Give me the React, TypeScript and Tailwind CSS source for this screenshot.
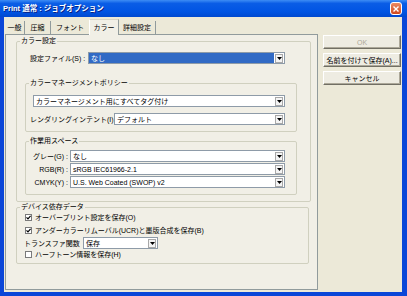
import React from "react"

type ComboProps = {
  text: string
  width: string
  active?: boolean
}

function Combo({ text, width, active }: ComboProps) {
  return (
    <div className={`flex h-[12px] shrink-0 items-center border border-[#8E9BA8] bg-white ${width}`}>
      <div
        className={`flex h-full flex-1 items-center overflow-hidden whitespace-nowrap pl-[2px] ${
          active ? "bg-[#316AC5] text-white" : "text-black"
        }`}
      >
        {text}
      </div>
      <div className="ml-[1px] mr-[1px] flex h-[9px] w-[8px] items-center justify-center border border-[#A8A8A8] bg-[#F4F4F4]">
        <svg width="5" height="3" viewBox="0 0 5 3">
          <path d="M0 0h5L2.5 3z" fill="#000" />
        </svg>
      </div>
    </div>
  )
}

function Check({ checked, label }: { checked?: boolean; label: string }) {
  return (
    <div className="flex h-[10px] items-center gap-[3px]">
      <div className="flex h-[7px] w-[7px] items-center justify-center border border-[#7A7A7A] bg-white">
        {checked && (
          <svg width="5" height="5" viewBox="0 0 5 5">
            <path d="M0.5 2.3l1.5 1.6L4.6 0.8" stroke="#000" strokeWidth="1.2" fill="none" />
          </svg>
        )}
      </div>
      <span className="whitespace-nowrap">{label}</span>
    </div>
  )
}

function Button({ label, disabled }: { label: string; disabled?: boolean }) {
  return (
    <div
      className={`flex h-[14px] w-[78px] items-center justify-center whitespace-nowrap border border-b-[#716F64] border-l-white border-r-[#716F64] border-t-white bg-[#EEECE2] shadow-[inset_-1px_-1px_#ACA899] ${
        disabled ? "text-[#ACA899]" : "text-black"
      }`}
    >
      {label}
    </div>
  )
}

export default function App() {
  return (
    <div className="flex h-[296px] w-[407px] flex-col bg-[#0A46D8] font-['Liberation_Sans','Noto_Sans_CJK_JP',sans-serif] text-[7px] leading-none text-black">
      {/* title bar */}
      <div className="flex h-[17px] shrink-0 items-center justify-between bg-[linear-gradient(to_bottom,#3D8DF5_0%,#0A5DE6_20%,#0054E3_70%,#0049CF_100%)] pl-[3px] pr-[5px]">
        <span className="text-[7.5px] font-bold text-white [text-shadow:1px_1px_#0A1F80]">
          Print 通常 : ジョブオプション
        </span>
        <div className="flex h-[13px] w-[12px] items-center justify-center rounded-[3px] border border-white bg-[linear-gradient(to_bottom,#EC8B63,#D0471E)]">
          <svg width="6" height="6" viewBox="0 0 6 6">
            <path d="M0.5 0.5l5 5M5.5 0.5l-5 5" stroke="#fff" strokeWidth="1.4" />
          </svg>
        </div>
      </div>

      {/* client */}
      <div className="mb-[4px] ml-[4px] mr-[5px] flex flex-1 bg-[#ECE9D8] pt-[2px]">
        <div className="ml-[1px] flex w-[313px] flex-col">
          {/* tabs */}
          <div className="flex h-[15px] items-end">
            <div className="flex h-[13px] w-[20px] items-center justify-center border-r border-[#919B9C]">一般</div>
            <div className="flex h-[13px] w-[26px] items-center justify-center border-r border-[#919B9C]">圧縮</div>
            <div className="flex h-[13px] w-[38px] items-center justify-center">フォント</div>
            <div className="relative z-10 -mb-px flex h-[16px] w-[30px] items-center justify-center border-l border-r border-t border-l-white border-r-[#919B9C] border-t-[#D8D4C4] bg-[#F1EFE6]">
              カラー
            </div>
            <div className="flex h-[13px] w-[37px] items-center justify-center border-r border-[#919B9C]">詳細設定</div>
          </div>

          {/* panel */}
          <div className="flex h-[256px] flex-col border border-[#919B9C] bg-[#F1EFE6]">
            <fieldset className="ml-[10px] mt-[2px] w-[295px] rounded-[2px] border border-[#D0D0BF] pb-[6px]">
              <legend className="ml-[3px] h-[8px] px-[1px] leading-[8px]">カラー設定</legend>
              <div className="mt-[7px] flex items-center pl-[13px]">
                <span className="w-[58px] whitespace-nowrap">設定ファイル(S) :</span>
                <Combo text="なし" width="w-[197px]" active />
              </div>

              <fieldset className="ml-[8px] mt-[15px] w-[272px] rounded-[2px] border border-[#D0D0BF] pb-[6px]">
                <legend className="ml-[3px] h-[8px] px-[1px] leading-[8px]">カラーマネージメントポリシー</legend>
                <div className="ml-[7px] mt-[8px]">
                  <Combo text="カラーマネージメント用にすべてタグ付け" width="w-[252px]" />
                </div>
                <div className="ml-[4px] mt-[6px] flex items-center">
                  <span className="w-[84px] whitespace-nowrap">レンダリングインテント(I) :</span>
                  <Combo text="デフォルト" width="w-[171px]" />
                </div>
              </fieldset>

              <fieldset className="ml-[8px] mt-[5px] w-[272px] rounded-[2px] border border-[#D0D0BF] pb-[6px]">
                <legend className="ml-[3px] h-[8px] px-[1px] leading-[8px]">作業用スペース</legend>
                <div className="mt-[5px] flex flex-col gap-[1px]">
                  {[
                    ["グレー(G) :", "なし"],
                    ["RGB(R) :", "sRGB IEC61966-2.1"],
                    ["CMYK(Y) :", "U.S. Web Coated (SWOP) v2"],
                  ].map(([label, value]) => (
                    <div key={label} className="flex items-center">
                      <span className="w-[44px] whitespace-nowrap pr-[2px] text-right">{label}</span>
                      <Combo text={value} width="w-[215px]" />
                    </div>
                  ))}
                </div>
              </fieldset>
            </fieldset>

            <fieldset className="ml-[10px] mt-[1px] w-[293px] rounded-[2px] border border-[#D0D0BF] pb-[4px]">
              <legend className="ml-[3px] h-[8px] px-[1px] leading-[8px]">デバイス依存データ</legend>
              <div className="mt-[1px] pl-[8px]">
                <Check checked label="オーバープリント設定を保存(O)" />
              </div>
              <div className="mt-[3px] pl-[8px]">
                <Check checked label="アンダーカラーリムーバル(UCR)と墨版合成を保存(B)" />
              </div>
              <div className="mt-[2px] flex items-center pl-[7px]">
                <span className="w-[59px] whitespace-nowrap">トランスファ関数</span>
                <Combo text="保存" width="w-[75px]" />
              </div>
              <div className="pl-[8px]">
                <Check label="ハーフトーン情報を保存(H)" />
              </div>
            </fieldset>
          </div>
        </div>

        {/* buttons */}
        <div className="ml-[5px] flex flex-col gap-[4px] pt-[16px]">
          <Button label="OK" disabled />
          <Button label="名前を付けて保存(A)..." />
          <Button label="キャンセル" />
        </div>
      </div>
    </div>
  )
}
